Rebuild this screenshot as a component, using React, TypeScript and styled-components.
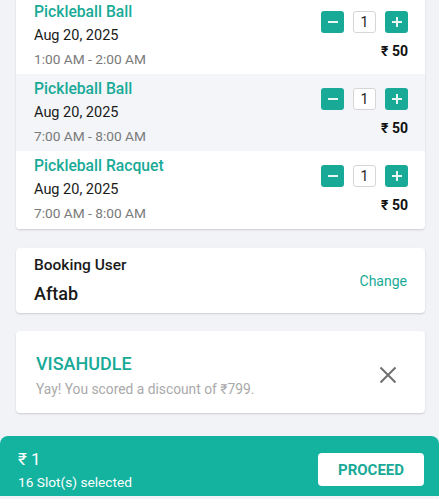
import React from "react";
import styled, { createGlobalStyle } from "styled-components";

const GREEN = "#18aa97";
const BAR = "#14b39f";

const Global = createGlobalStyle`
  html, body { margin: 0; padding: 0; background: #f1f3f7; overflow: hidden; }
  body { font-family: Roboto, "Noto Sans", Arial, sans-serif; -webkit-font-smoothing: antialiased; }
`;

const Page = styled.div`
  height: 499px;
  display: flex;
  flex-direction: column;
  margin-top: -3px;
`;

const Card = styled.div<{ $gap?: number }>`
  margin: ${(p) => p.$gap ?? 0}px 14px 0 16px;
  background: #fff;
  border-radius: 4px;
  box-shadow: 0 1px 2px rgba(0, 0, 0, 0.16);
  overflow: hidden;
`;

const ItemRow = styled.div<{ $shade?: boolean; $h: number }>`
  height: ${(p) => p.$h}px;
  box-sizing: border-box;
  display: flex;
  justify-content: space-between;
  padding: 4px 17px 0 18px;
  background: ${(p) => (p.$shade ? "#f3f5f8" : "#fff")};
`;

const Info = styled.div`
  display: flex;
  flex-direction: column;
`;

const Title = styled.div`
  color: ${GREEN};
  font-size: 15.7px;
  font-weight: 500;
  line-height: 22px;
`;

const DateText = styled.div`
  color: #1a1a1a;
  font-size: 14.5px;
  line-height: 20px;
  margin-top: 3px;
`;

const TimeText = styled.div`
  color: #7a7a7a;
  font-size: 13.7px;
  line-height: 20px;
  margin-top: 3px;
`;

const Right = styled.div`
  display: flex;
  flex-direction: column;
  align-items: flex-end;
  padding-top: 10px;
`;

const Stepper = styled.div`
  display: flex;
  align-items: center;
  gap: 9px;
`;

const StepBtn = styled.div`
  width: 23px;
  height: 22px;
  border-radius: 3px;
  background: ${GREEN};
  display: flex;
  align-items: center;
  justify-content: center;
`;

const Qty = styled.div`
  width: 21px;
  height: 20px;
  border: 1px solid #d6d6d6;
  border-radius: 3px;
  background: #fff;
  display: flex;
  align-items: center;
  justify-content: center;
  font-size: 14px;
  color: #222;
`;

const Price = styled.div`
  margin-top: 8px;
  font-size: 14px;
  font-weight: 700;
  line-height: 20px;
  color: #111;
`;

const BookingCard = styled(Card)`
  height: 65px;
  box-sizing: border-box;
  display: flex;
  align-items: center;
  justify-content: space-between;
  padding: 0 18px;
`;

const Label = styled.div`
  font-size: 15.5px;
  font-weight: 500;
  color: #1a1a1a;
  line-height: 20px;
`;

const UserName = styled.div`
  font-size: 18px;
  font-weight: 500;
  color: #1a1a1a;
  line-height: 24px;
  margin-top: 7px;
`;

const ChangeLink = styled.div`
  font-size: 14px;
  color: ${GREEN};
`;

const CouponCard = styled(Card)`
  height: 82px;
  box-sizing: border-box;
  display: flex;
  align-items: center;
  justify-content: space-between;
  padding: 6px 28px 0 20px;
`;

const Code = styled.div`
  font-size: 18px;
  font-weight: 500;
  color: ${GREEN};
  line-height: 24px;
`;

const Discount = styled.div`
  font-size: 13.8px;
  color: #a9a9a9;
  line-height: 18px;
  margin-top: 4px;
`;

const BottomBar = styled.div`
  margin-top: 23px;
  flex: 1;
  background: ${BAR};
  border-radius: 8px 8px 0 0;
  display: flex;
  justify-content: space-between;
  align-items: flex-start;
  padding: 12px 15px 0 18px;
`;

const Total = styled.div`
  color: #fff;
  font-size: 17px;
  line-height: 22px;
`;

const Slots = styled.div`
  color: #fff;
  font-size: 13.7px;
  line-height: 20px;
  margin-top: 2px;
`;

const Proceed = styled.div`
  margin-top: 5px;
  width: 106px;
  height: 33px;
  background: #fff;
  border-radius: 4px;
  display: flex;
  align-items: center;
  justify-content: center;
  color: ${GREEN};
  font-size: 15px;
  font-weight: 700;
`;

const Minus = () => (
  <svg width="12" height="12" viewBox="0 0 12 12">
    <path d="M1 6h10" stroke="#e8f7f4" strokeWidth="2" />
  </svg>
);
const Plus = () => (
  <svg width="12" height="12" viewBox="0 0 12 12">
    <path d="M1 6h10M6 1v10" stroke="#e8f7f4" strokeWidth="2" />
  </svg>
);
const Close = () => (
  <svg width="18" height="18" viewBox="0 0 18 18">
    <path d="M1.5 1.5l15 15M16.5 1.5l-15 15" stroke="#6f6f6f" strokeWidth="2" />
  </svg>
);

const items = [
  { title: "Pickleball Ball", time: "1:00 AM - 2:00 AM", h: 77 },
  { title: "Pickleball Ball", time: "7:00 AM - 8:00 AM", h: 77, shade: true },
  { title: "Pickleball Racquet", time: "7:00 AM - 8:00 AM", h: 78 },
];

export default function App() {
  return (
    <>
      <Global />
      <Page>
        <Card>
          {items.map((it, i) => (
            <ItemRow key={i} $shade={it.shade} $h={it.h}>
              <Info>
                <Title>{it.title}</Title>
                <DateText>Aug 20, 2025</DateText>
                <TimeText>{it.time}</TimeText>
              </Info>
              <Right>
                <Stepper>
                  <StepBtn><Minus /></StepBtn>
                  <Qty>1</Qty>
                  <StepBtn><Plus /></StepBtn>
                </Stepper>
                <Price>₹ 50</Price>
              </Right>
            </ItemRow>
          ))}
        </Card>
        <BookingCard $gap={19}>
          <div>
            <Label>Booking User</Label>
            <UserName>Aftab</UserName>
          </div>
          <ChangeLink>Change</ChangeLink>
        </BookingCard>
        <CouponCard $gap={18}>
          <div>
            <Code>VISAHUDLE</Code>
            <Discount>Yay! You scored a discount of ₹799.</Discount>
          </div>
          <Close />
        </CouponCard>
        <BottomBar>
          <div>
            <Total>₹ 1</Total>
            <Slots>16 Slot(s) selected</Slots>
          </div>
          <Proceed>PROCEED</Proceed>
        </BottomBar>
      </Page>
    </>
  );
}
